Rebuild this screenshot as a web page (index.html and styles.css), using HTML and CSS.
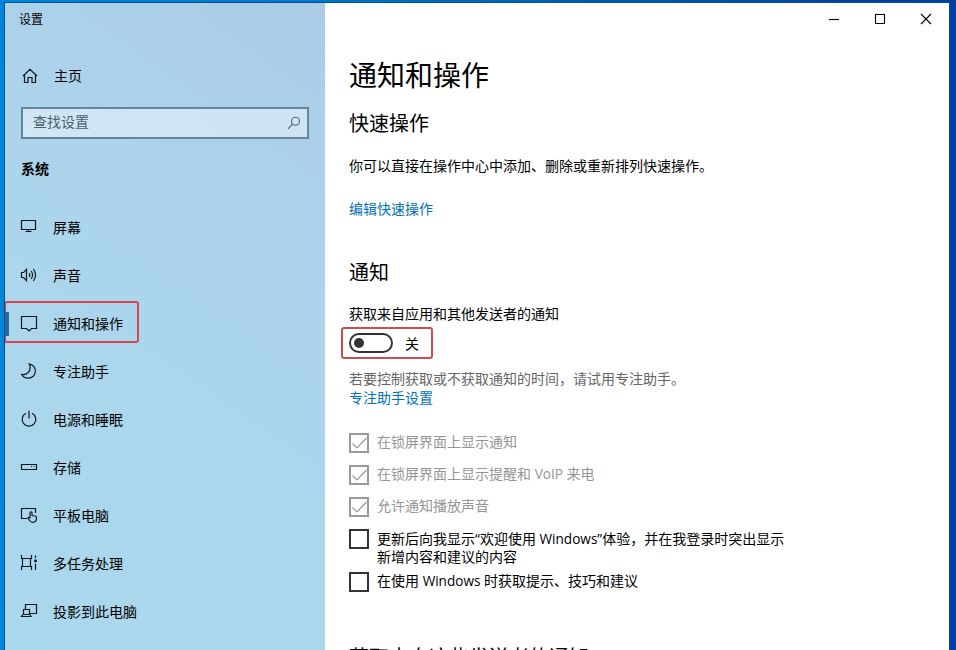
FILE: index.html
```html
<!DOCTYPE html>
<html lang="zh-CN">
<head>
<meta charset="utf-8">
<title>设置</title>
<link rel="stylesheet" href="styles.css">
</head>
<body>
<div class="window">
  <aside class="sidebar">
    <div class="app-title">设置</div>
    <a class="home">
      <svg class="icon" viewBox="0 0 18 18"><path d="M2 9 9 2.3 16 9M3.5 7.8V15.5H7V10.5H11V15.5H14.5V7.8"/></svg>
      <span>主页</span>
    </a>
    <div class="search">
      <span>查找设置</span>
      <svg class="search-icon" viewBox="0 0 14 14"><circle cx="8.5" cy="5.2" r="4"/><path d="M5.7 8 1 12.8"/></svg>
    </div>
    <h2 class="group">系统</h2>
    <nav class="nav">
      <a class="item"><svg class="icon" viewBox="0 0 18 18"><path d="M1.5 2.5H15.5V11.5H1.5ZM8.5 11.5V13.5M5.5 13.5H11.5"/></svg><span>屏幕</span></a>
      <a class="item"><svg class="icon" viewBox="0 0 18 18"><path d="M1.5 6.5H3.7L6.5 3.4V14.6L3.7 11.5H1.5ZM9.1 7Q10.5 9 9.1 11M11.2 5Q13.9 9 11.2 13M13.4 3Q17.7 9 13.4 15"/></svg><span>声音</span></a>
      <a class="item active"><svg class="icon" viewBox="0 0 18 18"><path d="M1.5 2.5H16.5V14.5H11.5L9 17 6.5 14.5H1.5Z"/></svg><span>通知和操作</span></a>
      <a class="item"><svg class="icon" viewBox="0 0 18 18"><path d="M9.2 1.8C13 2.8 15.5 5.6 15.4 9.3C15.3 13.2 12.2 16.2 8.2 16.2C5.3 16.2 3 14.8 1.7 12.5C7 13.4 12.3 8.8 9.2 1.8Z"/></svg><span>专注助手</span></a>
      <a class="item"><svg class="icon" viewBox="0 0 18 18"><path d="M6 3.2A6.8 6.8 0 1 0 12 3.2M9 .8V8.5"/></svg><span>电源和睡眠</span></a>
      <a class="item"><svg class="icon" viewBox="0 0 18 18"><path d="M1.5 6.5H16.5V11.5H1.5ZM11 8.5H12M13.5 8.5H14.5"/></svg><span>存储</span></a>
      <a class="item"><svg class="icon" viewBox="0 0 18 18"><path d="M7 12.5H1.5V2.5H15.5V7M10 12.5V6.5Q11 5 12 6.5V9.5L15.3 10Q16.6 10.3 16.5 12Q16.5 16.3 12.8 16.3Q10.8 16.3 9.6 14.5L7.8 12Q8.6 10.8 10 12.2"/></svg><span>平板电脑</span></a>
      <a class="item"><svg class="icon" viewBox="0 0 18 18"><path d="M1.5 1V4.5H11.5V1M2.5 4.5V12.5M10.5 4.5V12.5M1.5 16V12.5H11.5V16M15.5 1.5V4M15.5 9.5V16"/><circle class="dot" cx="15.5" cy="6.8" r="1.5"/></svg><span>多任务处理</span></a>
      <a class="item"><svg class="icon" viewBox="0 0 18 18"><path d="M5.5 7.5V2.5H16.5V11.5H10M3.5 12.5V7.5H9.5V12.5M3 12.5H9.7L11 14.5H1.5Z"/></svg><span>投影到此电脑</span></a>
    </nav>
  </aside>
  <main class="main">
    <div class="controls">
      <span class="control"><svg viewBox="0 0 12 12"><path d="M1 6.5H11"/></svg></span>
      <span class="control"><svg viewBox="0 0 12 12"><path d="M1.5 1.5H10.5V10.5H1.5Z"/></svg></span>
      <span class="control"><svg viewBox="0 0 12 12"><path d="M1 1 11 11M11 1 1 11"/></svg></span>
    </div>
    <div class="content">
      <h1>通知和操作</h1>
      <h2 class="section quick">快速操作</h2>
      <p class="line intro">你可以直接在操作中心中添加、删除或重新排列快速操作。</p>
      <a class="line link edit">编辑快速操作</a>
      <h2 class="section notices">通知</h2>
      <p class="line">获取来自应用和其他发送者的通知</p>
      <div class="toggle-row"><span class="toggle"></span><span class="state">关</span></div>
      <p class="line hint">若要控制获取或不获取通知的时间，请试用专注助手。</p>
      <a class="line link">专注助手设置</a>
      <div class="checks">
        <div class="check disabled"><span class="box"><svg viewBox="0 0 20 20"><path d="M3.5 10.5 8 15 17.5 5"/></svg></span><span>在锁屏界面上显示通知</span></div>
        <div class="check disabled"><span class="box"><svg viewBox="0 0 20 20"><path d="M3.5 10.5 8 15 17.5 5"/></svg></span><span>在锁屏界面上显示提醒和 <span class="latin">VoIP</span> 来电</span></div>
        <div class="check disabled"><span class="box"><svg viewBox="0 0 20 20"><path d="M3.5 10.5 8 15 17.5 5"/></svg></span><span>允许通知播放声音</span></div>
        <div class="check tall"><span class="box"></span><span class="wrapped">更新后向我显示“欢迎使用 <span class="latin">Windows</span>”体验，并在我登录时突出显示<br>新增内容和建议的内容</span></div>
        <div class="check"><span class="box"></span><span>在使用 <span class="latin">Windows</span> 时获取提示、技巧和建议</span></div>
      </div>
      <h2 class="section senders">获取来自这些发送者的通知</h2>
    </div>
  </main>
</div>
</body>
</html>
```
FILE: styles.css
```css
*, *::before, *::after { box-sizing: border-box; margin: 0; padding: 0; }

html, body { height: 100%; overflow: hidden; }

body {
  padding: 3px 7px 0 5px;
  background: linear-gradient(90deg, #0086d8 0, #0075c5 35%, #0040a0 90%, #003eac 100%);
  font-family: "Segoe UI", "Open Sans", "Noto Sans CJK SC", sans-serif;
  font-size: 14px;
  line-height: 18px;
  color: #000;
}

.window {
  display: flex;
  height: 647px;
  overflow: hidden;
  box-shadow: 0 0 0 1px #07508a;
}

.sidebar {
  flex: 0 0 320px;
  background: linear-gradient(35deg, #aad8ed 0%, #acd5ec 60%, #abcbe7 100%);
}

.app-title { height: 32px; padding-left: 14px; font-size: 12px; line-height: 34px; }

.icon {
  flex: none;
  width: 18px;
  height: 18px;
  fill: none;
  stroke: #101820;
  stroke-width: 1.2;
}

.dot { fill: #101820; stroke: none; }

.home {
  display: flex;
  align-items: center;
  gap: 15px;
  height: 48px;
  margin-top: 17px;
  padding-left: 16px;
}

.search {
  display: flex;
  align-items: center;
  justify-content: space-between;
  height: 32px;
  margin: 7px 16px 0;
  padding: 0 6px 2px 10px;
  border: 2px solid #66849a;
  background: rgba(255, 255, 255, .43);
  color: #4c5e69;
}

.search-icon { width: 14px; height: 14px; margin-top: 2px; fill: none; stroke: #566974; stroke-width: 1.1; }

.group { height: 18px; margin: 21px 0 26px 16px; font-size: 14px; font-weight: 700; }

.item {
  position: relative;
  display: flex;
  align-items: center;
  gap: 15px;
  height: 48px;
  padding-left: 15px;
}

.item .icon { margin-top: -2px; }

.active::after {
  content: "";
  position: absolute;
  left: 0;
  top: 12px;
  width: 4px;
  height: 24px;
  background: #24689d;
}

.active::before {
  content: "";
  position: absolute;
  left: -1px;
  top: 1px;
  width: 135px;
  height: 42px;
  border: 2px solid #d34755;
  border-radius: 3px;
}

.main { flex: 1; background: #fff; }

.controls { display: flex; justify-content: flex-end; height: 32px; }

.control { display: flex; align-items: center; justify-content: center; width: 46px; }

.control svg { width: 12px; height: 12px; fill: none; stroke: #000; stroke-width: 1.1; }

.content { padding: 20px 0 0 24px; white-space: nowrap; }

h1 { height: 40px; font-size: 28px; line-height: 40px; font-weight: 400; }

.section { height: 28px; font-size: 20px; line-height: 28px; font-weight: 400; }

.quick { margin-top: 15px; }

.line { display: block; height: 18px; }

.intro { margin-top: 19px; }

.link { color: #0072b8; }

.edit { margin-top: 25px; }

.notices { margin: 41px 0 18px; }

.toggle-row {
  position: relative;
  display: flex;
  align-items: center;
  gap: 12px;
  height: 20px;
  margin: 10px 0 17px;
}

.toggle-row::before {
  content: "";
  position: absolute;
  left: -8px;
  top: -6px;
  width: 92px;
  height: 32px;
  border: 2px solid #c94e50;
  border-radius: 3px;
}

.toggle {
  display: flex;
  align-items: center;
  width: 44px;
  height: 20px;
  padding-left: 3px;
  border: 2px solid #333;
  border-radius: 10px;
}

.toggle::before { content: ""; width: 10px; height: 10px; border-radius: 50%; background: #333; }

.state { padding-top: 2px; }

.hint { margin-bottom: 1px; color: #666; }

.checks { margin-top: 26px; }

.check { display: flex; gap: 8px; height: 32px; }

.check.tall { height: 43px; }

.wrapped { padding-top: 1px; }

.latin { font-size: 13.6px; }

.box { flex: none; width: 20px; height: 20px; border: 2px solid #333; }

.box svg { display: block; width: 20px; height: 20px; margin: -2px; fill: none; stroke: #999; stroke-width: 1.2; }

.disabled { color: #959595; }

.disabled .box { border-color: #999; }

.senders { margin-top: 40px; }
```
